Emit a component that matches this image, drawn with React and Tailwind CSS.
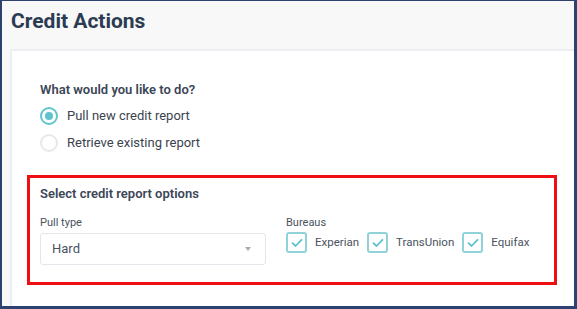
import React from 'react'

function Check() {
  return (
    <span className="flex h-[21px] w-[21px] items-center justify-center rounded-[3px] border-2 border-[#8fd3d9] bg-white">
      <svg width="12" height="10" viewBox="0 0 12 10" fill="none">
        <path d="M1.5 5.2 L4.6 8 L10.5 1.8" stroke="#5cc2ca" strokeWidth="1.8" strokeLinecap="round" strokeLinejoin="round" />
      </svg>
    </span>
  )
}

function Radio({ checked, label }) {
  return (
    <label className="flex items-center gap-[9px]">
      <span
        className={
          'flex h-[18px] w-[18px] items-center justify-center rounded-full border-2 ' +
          (checked ? 'border-[#63c5cc]' : 'border-[#e6e8eb]')
        }
      >
        {checked && <span className="h-[8px] w-[8px] rounded-full bg-[#5fc3cb]" />}
      </span>
      <span className="text-[13px] leading-[16px] text-[#3a4350]">{label}</span>
    </label>
  )
}

export default function App() {
  const bureaus = ['Experian', 'TransUnion', 'Equifax']

  return (
    <div className="h-[309px] w-[577px] overflow-hidden border-t-[1.5px] border-r-[3px] border-b-[3px] border-l-2 border-[#2e4270] bg-[#f8f8f8] font-['Roboto',sans-serif]">
      <div className="flex h-[48px] items-center px-[9px] pb-[6px]">
        <h1 className="text-[21px] font-bold text-[#2b3b52]">Credit Actions</h1>
      </div>
      <div className="ml-[8px] h-full border-t-2 border-l-2 border-[#eceef1] bg-white pt-[31px] pl-[15px] pr-[17px]">
        <p className="mb-[9px] pl-[13px] text-[13px] leading-[16px] font-semibold text-[#3c4656]">What would you like to do?</p>
        <div className="flex flex-col gap-[9px] pl-[13px]">
          <Radio checked label="Pull new credit report" />
          <Radio label="Retrieve existing report" />
        </div>

        <div className="mt-[23px] h-[110px] w-[530px] border-[3px] border-[#ee0f12] pt-[8px] pl-[10px]">
          <p className="text-[13px] leading-[16px] font-semibold text-[#3c4656]">Select credit report options</p>
          <div className="mt-[14px] flex gap-[20px]">
            <div>
              <p className="text-[11px] leading-[14px] text-[#4a5260]">Pull type</p>
              <div className="mt-[3px] flex h-[32px] w-[226px] items-center justify-between rounded-[3px] border border-[#e3e6ea] pl-[11px] pr-[14px]">
                <span className="text-[13px] text-[#4a5260]">Hard</span>
                <span className="h-0 w-0 border-x-[3.5px] border-t-[4px] border-x-transparent border-t-[#a7acb3]" />
              </div>
            </div>
            <div>
              <p className="text-[11px] leading-[14px] text-[#4a5260]">Bureaus</p>
              <div className="mt-[2px] flex items-center">
                {bureaus.map((b) => (
                  <div key={b} className="mr-[8px] flex items-center gap-[8px]">
                    <Check />
                    <span className="text-[11.5px] text-[#4a5260]">{b}</span>
                  </div>
                ))}
              </div>
            </div>
          </div>
        </div>
      </div>
    </div>
  )
}
